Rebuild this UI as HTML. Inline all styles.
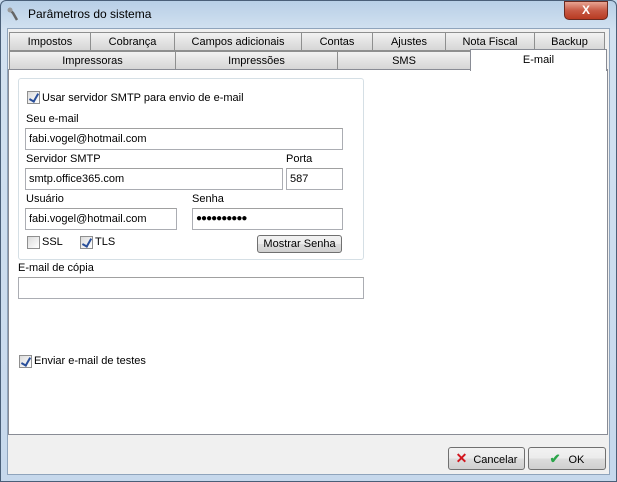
<!DOCTYPE html>
<html><head><style>
*{box-sizing:border-box;margin:0;padding:0}
body{width:617px;height:482px;overflow:hidden;font-family:"Liberation Sans",sans-serif;font-size:11px;color:#000;background:#c9dbee;position:relative}
.a{position:absolute}
.frame{left:0;top:0;width:617px;height:482px;border:1px solid #4a5f78;border-radius:6px 6px 0 0;background:linear-gradient(#b8cfe6,#d3e2f1 30px,#c6d8ec)}
.client{left:7px;top:28px;width:603px;height:447px;background:#f0f0f0;border:1px solid #8fa4bc}
.tab{position:absolute;height:19px;border:1px solid #8e8f8f;background:linear-gradient(#f2f2f2,#e3e3e3 50%,#d6d6d6);text-align:center;line-height:19px;font-size:11px}
.panel{left:8px;top:69px;width:600px;height:366px;background:#fff;border:1px solid #898c95}
.inp{position:absolute;height:22px;border:1px solid #abadb3;border-top-color:#a0a0a0;background:#fff;padding-left:3px;line-height:20px;font-size:11px}
.cb{position:absolute;width:13px;height:13px;border:1px solid #8f8f8f;background:linear-gradient(135deg,#dcdcdc,#fff)}
.cb.c::after{content:"";position:absolute;left:3px;top:0px;width:4px;height:8px;border:solid #2a4f9a;border-width:0 2px 2px 0;transform:rotate(30deg)}
.btn{position:absolute;border:1px solid #707070;border-radius:3px;background:linear-gradient(#f2f2f2,#ebebeb 50%,#dddddd 51%,#cfcfcf);text-align:center}
</style></head><body>
<div class="a frame"></div>
<div class="a" style="left:6px;top:7px;width:14px;height:14px;">
<svg width="14" height="14"><path d="M3 2 L7 6 L11 13" stroke="#666" stroke-width="2.5" fill="none"/><circle cx="4" cy="3" r="2.5" fill="#999"/></svg></div>
<div class="a" style="left:28px;top:7px;font-size:12px">Parâmetros do sistema</div>
<div class="a" style="left:564px;top:1px;width:44px;height:19px;border:1px solid #6b2a20;border-radius:0 0 5px 5px;background:linear-gradient(#e8a493,#c75a45 50%,#b83a22);color:#fff;font-weight:bold;text-align:center;line-height:17px;font-size:12px">X</div>
<div class="a client"></div>
<div class="tab" style="left:9px;top:32px;width:82px">Impostos</div>
<div class="tab" style="left:90px;top:32px;width:85px">Cobrança</div>
<div class="tab" style="left:174px;top:32px;width:128px">Campos adicionais</div>
<div class="tab" style="left:301px;top:32px;width:72px">Contas</div>
<div class="tab" style="left:372px;top:32px;width:74px">Ajustes</div>
<div class="tab" style="left:445px;top:32px;width:90px">Nota Fiscal</div>
<div class="tab" style="left:534px;top:32px;width:71px">Backup</div>
<div class="tab" style="left:9px;top:51px;width:167px">Impressoras</div>
<div class="tab" style="left:175px;top:51px;width:163px">Impressões</div>
<div class="tab" style="left:337px;top:51px;width:134px">SMS</div>
<div class="a panel"></div>
<div class="a" style="left:470px;top:49px;width:137px;height:22px;background:#fff;border:1px solid #898c95;border-bottom:none;text-align:center;line-height:20px">E-mail</div>
<div class="a" style="left:18px;top:78px;width:346px;height:182px;border:1px solid #d5dfe5;border-radius:3px"></div>
<div class="cb c" style="left:27px;top:91px"></div>
<div class="a" style="left:42px;top:92px">Usar servidor SMTP para envio de e-mail</div>
<div class="a" style="left:26px;top:113px">Seu e-mail</div>
<div class="inp" style="left:25px;top:128px;width:318px">fabi.vogel@hotmail.com</div>
<div class="a" style="left:26px;top:153px">Servidor SMTP</div>
<div class="a" style="left:286px;top:153px">Porta</div>
<div class="inp" style="left:25px;top:168px;width:258px">smtp.office365.com</div>
<div class="inp" style="left:286px;top:168px;width:57px">587</div>
<div class="a" style="left:26px;top:193px">Usuário</div>
<div class="a" style="left:192px;top:193px">Senha</div>
<div class="inp" style="left:25px;top:208px;width:152px">fabi.vogel@hotmail.com</div>
<div class="inp" style="left:192px;top:208px;width:151px;font-size:10px;letter-spacing:-1px">●●●●●●●●●●</div>
<div class="cb" style="left:27px;top:236px"></div>
<div class="a" style="left:42px;top:236px">SSL</div>
<div class="cb c" style="left:80px;top:236px"></div>
<div class="a" style="left:95px;top:236px">TLS</div>
<div class="btn" style="left:257px;top:235px;width:85px;height:18px;line-height:16px">Mostrar Senha</div>
<div class="a" style="left:18px;top:262px">E-mail de cópia</div>
<div class="inp" style="left:18px;top:277px;width:346px"></div>
<div class="cb c" style="left:19px;top:355px"></div>
<div class="a" style="left:34px;top:355px">Enviar e-mail de testes</div>
<div class="btn" style="left:448px;top:447px;width:77px;height:23px;line-height:21px"><span style="color:#d2161e;font-weight:bold;font-size:14px;margin-right:6px">✕</span>Cancelar</div>
<div class="btn" style="left:528px;top:447px;width:78px;height:23px;line-height:21px"><span style="color:#2ba54a;font-weight:bold;font-size:13px;margin-right:8px">✔</span>OK</div>
</body></html>
